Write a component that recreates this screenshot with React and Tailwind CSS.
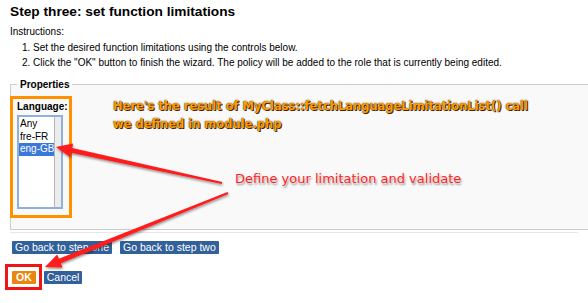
import React from 'react';

function arrowPoints([tx, ty], [hx, hy], headLen = 16, headHalf = 7, tail = 1, neck = 2.5) {
  const dx = hx - tx;
  const dy = hy - ty;
  const len = Math.hypot(dx, dy);
  const ux = dx / len;
  const uy = dy / len;
  const nx = -uy;
  const ny = ux;
  const bx = hx - ux * headLen;
  const by = hy - uy * headLen;
  const pts = [
    [tx + nx * tail, ty + ny * tail],
    [bx + nx * neck, by + ny * neck],
    [bx + nx * headHalf, by + ny * headHalf],
    [hx, hy],
    [bx - nx * headHalf, by - ny * headHalf],
    [bx - nx * neck, by - ny * neck],
    [tx - nx * tail, ty - ny * tail],
  ];
  return pts.map((p) => p.map((v) => v.toFixed(1)).join(',')).join(' ');
}

function Button({ children, tone = 'blue' }) {
  return (
    <button
      type="button"
      className={
        tone === 'orange'
          ? 'h-[13px] rounded-[1px] bg-[#e8860f] px-[4px] text-[10.5px] font-bold leading-[13px] text-white'
          : 'h-[13px] rounded-[1px] bg-[#31609a] px-[3px] text-[10.5px] leading-[13px] text-white'
      }
    >
      {children}
    </button>
  );
}

export default function App() {
  const options = ['Any', 'fre-FR', 'eng-GB'];
  return (
    <div className="relative h-[303px] w-[588px] overflow-hidden bg-white px-[10px] font-['Liberation_Sans',Arial,sans-serif] text-[10px] text-black">
      <h2 className="pt-[3px] text-[13.7px] font-bold leading-[18px]">Step three: set function limitations</h2>
      <p className="mt-[4px] leading-[13px]">Instructions:</p>
      <ol className="mt-[2px] list-decimal pl-[23px] leading-[15px]">
        <li>Set the desired function limitations using the controls below.</li>
        <li>Click the "OK" button to finish the wizard. The policy will be added to the role that is currently being edited.</li>
      </ol>

      <fieldset className="-mr-6 mt-[8px] border border-[#cccccc] bg-[#f9f9f9] pb-[11px]">
        <legend className="ml-[6px] px-[3px] text-[10px] font-bold leading-[13px]">Properties</legend>
        <div className="-ml-px mt-[5px] h-[122px] w-[62px] border-[3px] border-[#ff9100] bg-[#f9f9f9] pl-[4px] pt-[1px]">
          <div className="text-[10px] font-bold leading-[13px]">Language:</div>
          <div className="mt-[2px] flex h-[94px] w-[46px] border-2 border-[#8fb0dc] bg-white">
            <div className="min-w-0 flex-1 pt-[1px] text-[10px] leading-[12.5px]">
              {options.map((o) => (
                <div
                  key={o}
                  className={
                    o === 'eng-GB'
                      ? 'whitespace-nowrap bg-[#3b78d8] pl-px text-white'
                      : 'whitespace-nowrap pl-px'
                  }
                >
                  {o}
                </div>
              ))}
            </div>
            <div className="w-[7px] shrink-0 border-l border-[#b5b5b5] bg-[#ececec]" />
          </div>
        </div>
      </fieldset>
      <div className="mt-[2px] h-px bg-[#e8e8e0]" />

      <div className="mt-[8px] flex gap-[8px] pl-[2px]">
        <Button>Go back to step one</Button>
        <Button>Go back to step two</Button>
      </div>
      <div className="mt-[16px] flex items-center gap-[2px] pl-[2px]">
        <div className="-my-[6px] -ml-[7px] border-[3px] border-[#ee1515] pb-[2px] pl-[4px] pr-[3px] pt-[3px]">
          <Button tone="orange">OK</Button>
        </div>
        <Button>Cancel</Button>
      </div>

      <div className="absolute left-[113px] top-[97px] font-['DejaVu_Sans',Verdana,sans-serif] text-[11.5px] font-bold leading-[18px] text-[#ff9c00] [text-shadow:_0_0_1.5px_#2a1500,_1px_1px_0_#4a2800]">
        <div>Here's the result of MyClass::fetchLanguageLimitationList() call</div>
        <div>we defined in module.php</div>
      </div>

      <div className="absolute left-[235px] top-[171px] font-['DejaVu_Sans',Verdana,sans-serif] text-[13px] leading-[16px] text-[#ff1e1e] [text-shadow:_0_0_2px_#ffffff,_1px_2px_2px_#8a8a8a]">
        Define your limitation and validate
      </div>

      <svg className="pointer-events-none absolute left-0 top-0" width="588" height="303" viewBox="0 0 588 303">
        <defs>
          <filter id="sh" x="-10%" y="-10%" width="120%" height="130%">
            <feDropShadow dx="0.5" dy="1.5" stdDeviation="1" floodColor="#000" floodOpacity="0.45" />
          </filter>
        </defs>
        <g fill="#ff1a1a" filter="url(#sh)">
          <polygon points={arrowPoints([222, 183], [56, 147])} />
          <polygon points={arrowPoints([228, 193], [45, 267])} />
        </g>
      </svg>
    </div>
  );
}
